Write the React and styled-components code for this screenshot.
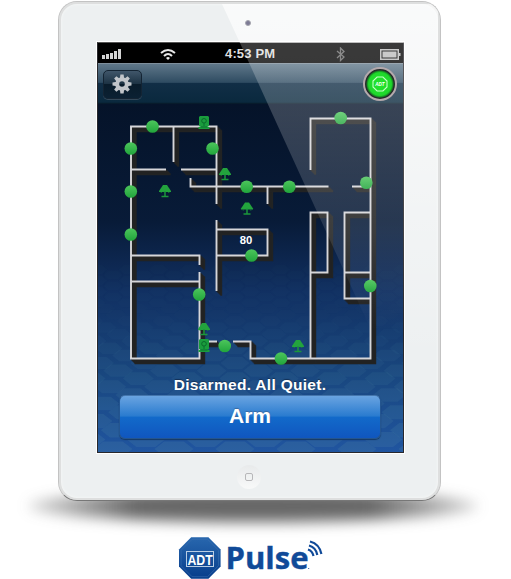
import React from "react";
import styled, { createGlobalStyle } from "styled-components";

const GlobalStyle = createGlobalStyle`
  * { box-sizing: border-box; }
  body { margin: 0; background: #fff; overflow: hidden; font-family: "Liberation Sans", Arial, sans-serif; }
`;

const Page = styled.main`
  width: 511px;
  height: 579px;
  padding-top: 1px;
  display: flex;
  flex-direction: column;
  overflow: hidden;
  background: #fff;
`;

const Stage = styled.section`
  position: relative;
  height: 536px;
  flex: none;
`;

const FloorShadow = styled.div`
  position: absolute;
  left: 28px;
  top: 489px;
  width: 450px;
  height: 32px;
  border-radius: 50%;
  background: linear-gradient(90deg, rgba(60,60,60,0.2), rgba(60,60,60,0.78) 24%, rgba(60,60,60,0.78) 76%, rgba(60,60,60,0.2));
  filter: blur(7px);
`;

const Tablet = styled.div`
  position: relative;
  width: 383px;
  height: 500px;
  margin-left: 58px;
  padding: 15px 36px 0 38px;
  display: flex;
  flex-direction: column;
  align-items: flex-start;
  overflow: hidden;
  border: 1px solid #c3c3c3;
  border-bottom-color: #777;
  border-radius: 19px;
  background: #edf0f1;
  box-shadow: inset 0 0 0 2px #dedfdf, inset 0 0 2px 3px #f3f5f5;
`;

const Lens = styled.div`
  position: relative;
  z-index: 1;
  width: 6px;
  height: 6px;
  margin: 3px 0 16px 148px;
  border-radius: 50%;
  border: 1px solid #a6a6ae;
  background: #7d7b95;
`;

const Screen = styled.div`
  width: 307px;
  height: 411px;
  flex: none;
  display: flex;
  flex-direction: column;
  border: 1px solid #28282c;
  border-top-color: #555;
  box-shadow: 0 0 0 1px #fff;
  background: #06152e;
`;

const StatusBar = styled.header`
  height: 20px;
  flex: none;
  display: grid;
  grid-template-columns: 21px 37px 16px 44px 66px 50px 12px 32px 22px;
  align-items: center;
  padding-left: 4px;
  background: #000;
  color: #dedede;
`;

const Clock = styled.span`
  grid-column: 5;
  justify-self: start;
  margin-left: 5px;
  font-size: 13px;
  font-weight: 700;
  line-height: 22px;
  letter-spacing: 0.15px;
  white-space: nowrap;
`;

const StatusIcon = styled.svg`
  display: block;
  grid-column: ${(p) => p.$column};
`;

const NavBar = styled.nav`
  height: 41px;
  flex: none;
  display: flex;
  justify-content: space-between;
  align-items: flex-start;
  padding: 6px 6px 0 5px;
  border-top: 1px solid #7e8e9b;
  border-bottom: 1px solid #071b2b;
  background: linear-gradient(#5f7789 0, #2f4c62 47%, #112e46 50%, #0a293e 97%, #082234 100%);
`;

const SettingsButton = styled.button`
  width: 39px;
  height: 29px;
  padding: 0 1px 1px 0;
  display: grid;
  place-items: center;
  border: 1px solid #142433;
  border-radius: 5px;
  background: linear-gradient(#40566a, #1c3243 48%, #091c2b 50%, #0b2133);
  box-shadow: 0 1px 0 #34495a;
`;

const Badge = styled.div`
  position: relative;
  z-index: 1;
  width: 34px;
  height: 34px;
  margin-top: -3px;
  display: grid;
  place-items: center;
  border-radius: 50%;
  border: 2px solid #b4a9ac;
  background: radial-gradient(circle closest-side, #22e62c 0, #1fd82b 76%, #178a24 86%, #252b2a 93%);
`;

const Home = styled.main`
  height: 348px;
  position: relative;
  background: linear-gradient(#051329 0%, #081b38 34%, #113062 54%, #19477f 78%, #2055a0 100%);
`;

const PlanDrawing = styled.svg`
  display: block;
  width: 305px;
  height: 348px;
`;

const ControlPanel = styled.section`
  position: absolute;
  inset: 270px 1px auto 0;
  display: flex;
  flex-direction: column;
  align-items: center;
`;

const Status = styled.div`
  height: 21px;
  color: #fff;
  font-size: 15.5px;
  font-weight: 700;
  letter-spacing: 0.3px;
  line-height: 21px;
  white-space: nowrap;
  text-shadow: 0 -1px 1px #132f54;
`;

const ArmButton = styled.button`
  width: 262px;
  height: 44px;
  padding: 0 0 3px;
  border: 1px solid #24558f;
  border-top-color: #4576ad;
  border-radius: 6px;
  color: #fff;
  background: linear-gradient(#6aa4e1 0, #297bcf 48%, #126aca 50%, #1056bf 100%);
  box-shadow: 0 1px 1px #143966;
  font: 700 21px "Liberation Sans", Arial, sans-serif;
  text-shadow: 0 -1px 1px #3868a0;
`;

const Glare = styled.svg`
  position: absolute;
  left: 0;
  top: 0;
  width: 381px;
  height: 498px;
  pointer-events: none;
`;

const HomeButton = styled.div`
  width: 24px;
  height: 24px;
  margin: 12px 0 0 140px;
  display: grid;
  place-items: center;
  flex: none;
  border-radius: 50%;
  background: linear-gradient(#e8eaeb, #f8f9f9);
`;

const HomeGlyph = styled.i`
  width: 8px;
  height: 8px;
  border: 1px solid #b7b7b9;
  border-radius: 2px;
`;

const Brand = styled.footer`
  display: flex;
  padding-left: 178px;
  height: 42px;
`;

const sensors = [
  [152.5,126.5],[130.8,148.5],[212.5,148.5],[130.8,191.5],[130.8,234.5],
  [246.7,186.7],[289.3,186.7],[340.7,118],[366.3,182.7],[251.5,255.5],
  [370.3,286],[199.2,294.5],[224.7,346],[281,358.5],
];
const lamps = [[225,174],[165,191],[247,208.5],[204,329],[298,346]];
const cameras = [[204,123],[204,346]];
const walls = "M131 358V126.5H216.5V204M173.5 127V162M131 169.5H166M181 169.5H216M190.5 178V186.5H328.5M267.5 187V204M216.5 220V291M217 229.5H267.5V255.5H217M131 255.5H199.5V265M131 281.5H199.5M199.5 272V358.5H130M200 341.5H217M233 341.5H250.5V358.5H370.5V118.5H310.5V170M352 186.5H370M310.5 358V212.5H327.5V272.5H311M370 212.5H344.5V298.5H370M345 272.5H370";

const tiles = [];
let rowY = 449;
let spacing = 9.5;
for (let row = 0; row < 26; row++) {
  const scale = Math.max(0.5, 1 - row * 0.026);
  const period = 61 * scale;
  const shift = row % 2 ? period / 2 : 0;
  for (let n = -6; n <= 6; n++) {
    tiles.push({ x: 235 + n * period + shift, y: rowY, w: 19.5 * scale, h: spacing * 0.8, o: Math.max(0.02, 0.23 - row * 0.0125) });
  }
  rowY -= spacing;
  spacing = Math.max(5.5, spacing - 0.2);
}

const octagon = (cx, cy, r) => {
  const c = r * 0.414;
  return `M${cx-c} ${cy-r}H${cx+c}L${cx+r} ${cy-c}V${cy+c}L${cx+c} ${cy+r}H${cx-c}L${cx-r} ${cy+c}V${cy-c}Z`;
};

function FloorPlan() {
  return (
    <PlanDrawing viewBox="98 104 305 348">
      <defs>
        <linearGradient id="sensor" x1="0" y1="0" x2="0" y2="1">
          <stop stopColor="#4dc65c" /><stop offset="1" stopColor="#21a53c" />
        </linearGradient>
      </defs>
      <g fill="#5088a5">
        {tiles.map((t, i) => (
          <path key={i} opacity={t.o} d={`M${t.x-t.w} ${t.y}L${t.x-t.w*.5} ${t.y-t.h}H${t.x+t.w*.5}L${t.x+t.w} ${t.y}L${t.x+t.w*.5} ${t.y+t.h}H${t.x-t.w*.5}Z`} />
        ))}
      </g>
      <g fill="none" stroke="#222323" strokeWidth="2">
        {[1,2,3,4,4.7].map(n => <path key={n} d={walls} transform={`translate(${n} ${n})`} />)}
      </g>
      <path d={walls} fill="none" stroke="#d6d6d9" strokeWidth="1.9" />
      {cameras.map(([x,y]) => (
        <g key={y} transform={`translate(${x} ${y})`}>
          <path d="M-4-7H4L5-6V3L3 4H5.5V6H-5.5V4H-3L-5 3V-6Z" fill="#1a9d3d" />
          <circle cy="-2.2" r="2.3" fill="none" stroke="#0a692c" />
          <path d="M0 0V3M-3.5 4H3.5" stroke="#087030" />
        </g>
      ))}
      {lamps.map(([x,y]) => (
        <g key={`${x}-${y}`} transform={`translate(${x} ${y})`}>
          <path d="M-2-6H2L6 0V1H-6V0Z" fill="#23a33d" />
          <path d="M0 0V5M-3.5 5.5H3.5" stroke="#1b963b" strokeWidth="1.5" />
          <path d="M-3.8 1V2M3.8 1V2" stroke="#168637" />
        </g>
      ))}
      {sensors.map(([x,y]) => <circle key={`${x}-${y}`} cx={x} cy={y} r="6.3" fill="url(#sensor)" />)}
      <text x="246" y="243.5" textAnchor="middle" fill="#fff" fontSize="11.3" fontWeight="700">80</text>
    </PlanDrawing>
  );
}

function PulseLogo() {
  return (
    <svg width="150" height="42" viewBox="178 537 150 42" role="img" aria-label="ADT Pulse">
      <defs><linearGradient id="brandBlue" x2="0" y2="1"><stop stopColor="#2867ae"/><stop offset="1" stopColor="#073d8b"/></linearGradient></defs>
      <path d={octagon(199.8,558,20.8)} fill="url(#brandBlue)" />
      <path d={octagon(199.8,558,18.7)} fill="none" stroke="#3b6fae" strokeWidth=".6" />
      <rect x="186.5" y="551.5" width="27" height="15" fill="none" stroke="#b9cde4" />
      <text x="187.5" y="564.5" fill="#fff" fontSize="15.5" textLength="25.2" lengthAdjust="spacingAndGlyphs" fontWeight="700">ADT</text>
      <text x="225.5" y="569" fill="#104a98" stroke="#104a98" strokeWidth=".4" fontFamily="Open Sans, Liberation Sans, sans-serif" fontSize="31" fontWeight="700" textLength="83" lengthAdjust="spacingAndGlyphs">Pulse</text>
      <g fill="none" stroke="#104a98" strokeWidth="2.2">
        <path d="M308 549.5Q312.5 551 313.5 556" /><path d="M309 545.5Q316 547.5 317.3 555" /><path d="M310 541.5Q319.5 544 321.4 554" />
      </g>
      <circle cx="308.7" cy="568.5" r=".6" fill="#104a98" />
    </svg>
  );
}

export default function App() {
  return (
    <>
      <GlobalStyle />
      <Page>
        <Stage>
          <FloorShadow />
          <Tablet>
            <Lens />
            <Screen>
              <StatusBar>
                <StatusIcon $column={1} width="20" height="12">
                  {[4,5,6,8,10].map((h,i) => <rect key={i} x={i*4} y={11-h} width="3" height={h} fill="#d4d4d4" />)}
                </StatusIcon>
                <StatusIcon $column={3} width="16" height="13" viewBox="0 0 16 13">
                  <path d="M1 5Q8-1 15 5M4 8Q8 4 12 8" fill="none" stroke="#e6e6e6" strokeWidth="2" />
                  <path d="M6 10Q8 8 10 10L8 12Z" fill="#eee" />
                </StatusIcon>
                <Clock>4:53 PM</Clock>
                <StatusIcon $column={7} width="10" height="15" viewBox="0 0 10 15">
                  <path d="M1 4L8 10L4.5 13.5V1L8 4.5L1 11" fill="none" stroke="#696969" strokeWidth="1.3" />
                </StatusIcon>
                <StatusIcon $column={9} width="21" height="11">
                  <rect x=".75" y=".75" width="17.5" height="9.5" fill="none" stroke="#bbb" strokeWidth="1.5" />
                  <rect x="2.5" y="2.5" width="14" height="6" fill="#bbb" /><rect x="18.5" y="4" width="2" height="3" fill="#bbb" />
                </StatusIcon>
              </StatusBar>
              <NavBar>
                <SettingsButton aria-label="Settings">
                  <svg width="20" height="20" viewBox="-10 -10 20 20">
                    <g fill="#c1c5ca">
                      {[0,45,90,135,180,225,270,315].map(a => <path key={a} transform={`rotate(${a})`} d="M-2.2-5L-1.6-9.5H1.6L2.2-5Z" />)}
                    </g>
                    <circle r="4.8" fill="none" stroke="#c1c5ca" strokeWidth="4" />
                  </svg>
                </SettingsButton>
                <Badge>
                  <svg width="18" height="18" viewBox="0 0 18 18">
                    <path d={octagon(9,9,7)} fill="none" stroke="#c3ffc4" strokeWidth="1.1" />
                    <text x="4.2" y="11.1" fontSize="6" fontWeight="700" fontStyle="italic" textLength="9.5" lengthAdjust="spacingAndGlyphs" fill="#fff">ADT</text>
                  </svg>
                </Badge>
              </NavBar>
              <Home>
                <FloorPlan />
                <ControlPanel>
                  <Status>Disarmed. All Quiet.</Status>
                  <ArmButton>Arm</ArmButton>
                </ControlPanel>
              </Home>
            </Screen>
            <HomeButton><HomeGlyph /></HomeButton>
            <Glare viewBox="59 2 381 498">
              <defs>
                <linearGradient id="glare" gradientUnits="userSpaceOnUse" x1="0" y1="0" x2="0" y2="330">
                  <stop stopColor="#fff" stopOpacity=".24"/><stop offset=".3" stopColor="#fff" stopOpacity=".21"/><stop offset=".7" stopColor="#fff" stopOpacity=".12"/><stop offset="1" stopColor="#fff" stopOpacity="0"/>
                </linearGradient>
                <linearGradient id="bezelGlare" gradientUnits="userSpaceOnUse" x1="0" y1="0" x2="0" y2="360">
                  <stop stopColor="#fff" stopOpacity=".7"/><stop offset="1" stopColor="#fff" stopOpacity="0"/>
                </linearGradient>
              </defs>
              <path d="M240 43H404V330H371Z" fill="url(#glare)" />
              <path d="M222 4H438V360H404V43H240Z" fill="url(#bezelGlare)" />
            </Glare>
          </Tablet>
        </Stage>
        <Brand><PulseLogo /></Brand>
      </Page>
    </>
  );
}
